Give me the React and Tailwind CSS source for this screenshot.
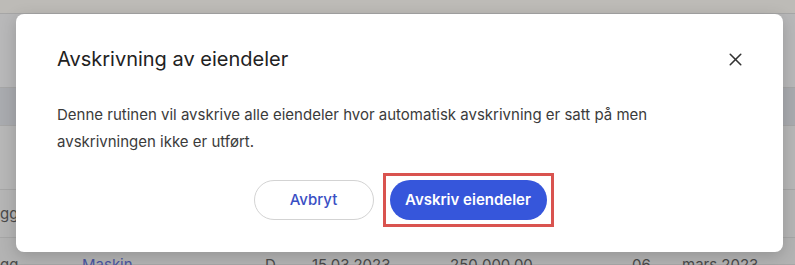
import { X } from "lucide-react";

const rows = [
  { h: "h-[14px]", bg: "bg-[#bdbbb7]" },
  { h: "h-[74px]", bg: "bg-[#b8b8b9]" },
  { h: "h-[38px]", bg: "bg-[#a9abaf]" },
  { h: "h-[64px]", bg: "bg-[#b7b7b7]" },
  { h: "h-[48px]", bg: "bg-[#b5b5b5]" },
  { h: "h-[27px]", bg: "bg-[#b3b3b3]" },
];

export default function App() {
  return (
    <div
      className="relative w-[795px] h-[265px] overflow-hidden bg-[#b5b5b5]"
      style={{ fontFamily: "Inter, 'Noto Sans', sans-serif" }}>
      {/* dimmed page behind the dialog */}
      <div className="flex flex-col">
        {rows.map((r, i) => (
          <div key={i} className={`${r.h} ${r.bg} border-b border-[#a6a6a6] w-full`} />
        ))}
      </div>
      <div className="absolute left-0 top-[203px] text-[15px] text-[#4a4a4a]">gg</div>
      <div className="absolute left-0 top-[254px] w-full flex text-[15px] text-[#4a4a4a]">
        <span className="w-[82px]">gg</span>
        <span className="w-[183px] text-[#4a55a0]">Maskin</span>
        <span className="w-[47px]">D</span>
        <span className="w-[138px]">15.03.2023</span>
        <span className="w-[182px]">250 000,00</span>
        <span className="w-[50px]">06</span>
        <span>mars 2023</span>
      </div>

      {/* dialog */}
      <div className="absolute left-[16px] top-[14px] w-[767px] h-[238px] bg-white rounded-[8px] shadow-[0_4px_16px_rgba(0,0,0,0.18)] px-[41px] pt-[31px]">
        <div className="flex items-center justify-between">
          <h2 className="text-[20px] text-[#222] leading-[28px]">Avskrivning av eiendeler</h2>
          <button className="mr-[-4px] text-[#333]">
            <X size={21} strokeWidth={1.8} />
          </button>
        </div>
        <p className="mt-[28px] text-[15px] leading-[27px] text-[#3b3b3b] w-[640px]">
          Denne rutinen vil avskrive alle eiendeler hvor automatisk avskrivning er satt på men
          avskrivningen ikke er utført.
        </p>
        <div className="mt-[25px] flex items-center justify-center gap-[16px] pl-[1px]">
          <button className="w-[120px] h-[40px] rounded-full border border-[#d3d3d3] text-[15px] font-medium text-[#3a4fc4]">
            Avbryt
          </button>
          <div className="border-[3px] border-[#d9534f] p-[4px] -m-[7px]">
            <button className="w-[157px] h-[40px] rounded-full bg-[#3656db] text-[15px] font-semibold text-white">
              Avskriv eiendeler
            </button>
          </div>
        </div>
      </div>
    </div>
  );
}
